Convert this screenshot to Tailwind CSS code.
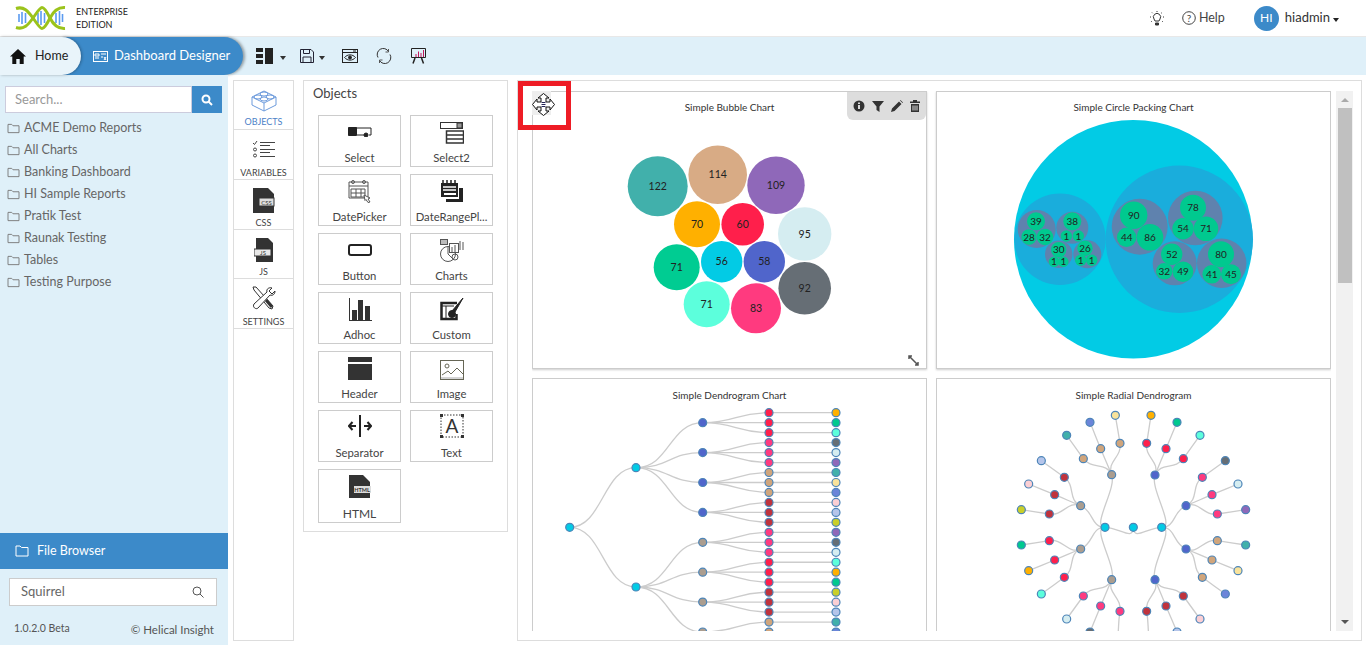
<!doctype html>
<html lang="en">
  <head>
    <meta charset="UTF-8" />
    <title>Dashboard Designer</title>
    <script src="https://cdn.jsdelivr.net/npm/@tailwindcss/browser@4"></script>
  </head>
  <body class="h-[658px] w-[1366px] overflow-hidden bg-white font-['Lato','Liberation_Sans',sans-serif] text-[#333]">
    <svg class="hidden">
      <symbol id="folder" viewBox="0 0 14 12"><path d="M1 10.500V1.500h4l1.500 1.500h6.500v7.500z" fill="none" stroke="#777" stroke-width="1" /></symbol>
    </svg>

    <header class="flex h-[37px] items-center border-b border-[#e8e8e8] pl-[15px] pr-[27px]">
      <svg width="51" height="26" viewBox="15 4 51 26" fill="none">
        <g stroke="#5b9bf0" stroke-width="1.600">
          <path d="M19 13v8M22 11v12M25.500 12v10M38 12v10M41 10v14M44.500 12v10M56 12v10M59.500 10v14M62.500 13v8" />
        </g>
        <path d="M16 7.500C24 5 28 10 33 17s7 10.500 9 10.500S47 23 50 17s8-11 15-10.500" stroke="#9bc31c" stroke-width="3" />
        <path d="M16 26.500C24 29 28 24 33 17s7-10.500 9-10.500S47 11 50 17s8 11 15 10.500" stroke="#9bc31c" stroke-width="3" />
      </svg>
      <div class="ml-[10px] text-[9px] leading-[13px] text-[#222]">ENTERPRISE<br />EDITION</div>
      <svg class="ml-auto" width="16" height="17" viewBox="0 0 16 17" fill="none" stroke="#333">
        <path d="M5 9a3.600 3.600 0 1 1 6 0l-1 2H6z" /><path d="M6.500 13h3v2h-3z" fill="#333" /><path d="M8 1v1M1 7h1M14 7h1M3 2.500l1 1M13 2.500l-1 1M2 12l1-1M14 12l-1-1" stroke-dasharray="1 1" />
      </svg>
      <svg class="ml-[17px]" width="14" height="14" viewBox="0 0 14 14" fill="none"><circle cx="7" cy="7" r="6.300" stroke="#444" /><text x="7" y="10.500" text-anchor="middle" font-size="10" fill="#444">?</text></svg>
      <span class="ml-[3px] text-[12.500px] text-[#444]">Help</span>
      <div class="ml-[29px] flex h-[25px] w-[25px] items-center justify-center rounded-full bg-[#3c8ac9] text-[12px] text-white">HI</div>
      <span class="ml-[6px] text-[13px] text-[#333]">hiadmin</span>
      <span class="ml-[3px] mt-[4px] h-0 w-0 border-x-[3.500px] border-t-[4px] border-x-transparent border-t-[#222]"></span>
    </header>

    <nav class="flex h-[38px] items-center bg-[#dff0f9]">
      <div class="relative z-10 flex h-full w-[81px] items-center rounded-r-[22px] bg-[#e9f4fa] pl-[10px] text-[12.500px] text-[#222] shadow-[1px_0_3px_rgba(0,0,0,0.3)]">
        <svg width="16" height="15" viewBox="0 0 16 15" fill="#111"><path d="M8 0 0 7.500h2.300V15h4v-5h3.400v5h4V7.500H16z" /></svg>
        <span class="ml-[9px]">Home</span>
      </div>
      <div class="-ml-[20px] flex h-full w-[182px] items-center rounded-r-[22px] bg-[#3c8ac9] pl-[32px] text-[13px] text-white shadow-[2px_0_3px_rgba(0,0,0,0.35)]">
        <svg width="15" height="11" viewBox="0 0 15 11" fill="none" stroke="#fff"><rect x="0.500" y="0.500" width="14" height="10" /><path d="M2 3h4v2H2zM8 3h5M8 6h2M11 6l2 3M13 6l-2 3M2 7h4" /></svg>
        <span class="ml-[6px]">Dashboard Designer</span>
      </div>
      <svg class="ml-[13px]" width="17" height="16" viewBox="0 0 17 16" fill="#222"><rect x="0" y="0" width="7" height="4" /><rect x="0" y="6" width="7" height="4" /><rect x="0" y="12" width="7" height="4" /><rect x="9" y="0" width="8" height="16" /></svg>
      <span class="ml-[7px] mt-[4px] h-0 w-0 border-x-[3.500px] border-t-[4px] border-x-transparent border-t-[#333]"></span>
      <svg class="ml-[14px]" width="14" height="14" viewBox="0 0 14 14" fill="none" stroke="#223"><path d="M.5.500h10.500l2.500 2.500v10.500H.5z" /><path d="M3.500.500v4h6v-4M3 13.500V8h8v5.500" /></svg>
      <span class="ml-[5px] mt-[4px] h-0 w-0 border-x-[3.500px] border-t-[4px] border-x-transparent border-t-[#333]"></span>
      <svg class="ml-[17px]" width="16" height="14" viewBox="0 0 16 14" fill="none" stroke="#222"><rect x="0.500" y="0.500" width="15" height="13" /><path d="M.5 3.500h15M11 2h3" /><path d="M2.500 8.500c3-3.500 8-3.500 11 0-3 3.500-8 3.500-11 0z" /><circle cx="8" cy="8.500" r="1.500" fill="#222" /></svg>
      <svg class="ml-[18px]" width="16" height="16" viewBox="0 0 16 16" fill="none" stroke="#333"><path d="M2 9.500A6 6 0 0 1 12.500 3.500M14 6.500A6 6 0 0 1 3.500 12.500" /><path d="M12.500 1v3h-3M3.500 15v-3h3" stroke="#555" /></svg>
      <svg class="ml-[19px]" width="15" height="16" viewBox="0 0 15 16" fill="none" stroke="#222"><path d="M.5.500h14v9H.5z" /><path d="M4 10 2 15.500M10.500 10l2 5.500" stroke-width="1.500" /><path d="M5 9V6M7.500 9V3.500M10 9V5M12.500 9V2" stroke="#c2185b" /></svg>
    </nav>

    <main class="flex h-[583px] items-start">
      <aside class="flex h-[570px] w-[228px] flex-col bg-[#dff0f9] text-[12.500px] text-[#666]">
        <div class="ml-[5px] mt-[11px] flex h-[27px] w-[217px]">
          <div class="flex flex-1 items-center border border-[#ccd] bg-white pl-[9px] text-[13px] text-[#999]">Search...</div>
          <div class="flex w-[30px] items-center justify-center bg-[#3c8ac9]">
            <svg width="12" height="12" viewBox="0 0 12 12" fill="none" stroke="#fff" stroke-width="2"><circle cx="5" cy="5" r="3.500" /><path d="m7.500 7.500 3.500 3.500" /></svg>
          </div>
        </div>
        <ul class="mt-[4px] pl-[7px]">
          <li class="flex h-[22px] items-center gap-[4px]"><svg width="13" height="11"><use href="#folder" /></svg>ACME Demo Reports</li>
          <li class="flex h-[22px] items-center gap-[4px]"><svg width="13" height="11"><use href="#folder" /></svg>All Charts</li>
          <li class="flex h-[22px] items-center gap-[4px]"><svg width="13" height="11"><use href="#folder" /></svg>Banking Dashboard</li>
          <li class="flex h-[22px] items-center gap-[4px]"><svg width="13" height="11"><use href="#folder" /></svg>HI Sample Reports</li>
          <li class="flex h-[22px] items-center gap-[4px]"><svg width="13" height="11"><use href="#folder" /></svg>Pratik Test</li>
          <li class="flex h-[22px] items-center gap-[4px]"><svg width="13" height="11"><use href="#folder" /></svg>Raunak Testing</li>
          <li class="flex h-[22px] items-center gap-[4px]"><svg width="13" height="11"><use href="#folder" /></svg>Tables</li>
          <li class="flex h-[22px] items-center gap-[4px]"><svg width="13" height="11"><use href="#folder" /></svg>Testing Purpose</li>
        </ul>
        <div class="mt-auto flex h-[36px] items-center bg-[#3c8ac9] pl-[15px] text-[12.500px] text-white">
          <svg width="14" height="12" viewBox="0 0 14 12" fill="none" stroke="#fff"><path d="M1 11V1h4l1.500 1.500H13V11z" /></svg>
          <span class="ml-[8px]">File Browser</span>
        </div>
        <div class="ml-[9px] mt-[9px] flex h-[28px] w-[208px] items-center justify-between border border-[#ccc] bg-white pl-[11px] pr-[12px] text-[13px] text-[#666]">
          Squirrel
          <svg width="12" height="12" viewBox="0 0 12 12" fill="none" stroke="#555"><circle cx="5" cy="5" r="4" /><path d="m8 8 3.500 3.500" /></svg>
        </div>
        <div class="flex h-[39px] justify-between px-[14px] pt-[15px] text-[#555]">
          <span class="text-[10.500px]">1.0.2.0 Beta</span><span class="text-[11.500px]">© Helical Insight</span>
        </div>
      </aside>

      <div class="ml-[5px] mt-[5px] h-[561px] w-[61px] border border-[#ddd] text-center text-[9px]">
        <div class="flex h-[49px] flex-col items-center justify-end border-b border-[#ddd] pb-[1px] text-[#4d7fc7]">
          <svg width="26" height="24" viewBox="0 0 26 24" fill="none" stroke="#6d9bdc"><path d="M1 9 13 3l12 6v8l-12 6-12-6zM1 9l12 6 12-6M13 15v8" /><ellipse cx="13" cy="6" rx="4" ry="2" /><ellipse cx="7" cy="9" rx="4" ry="2" /><ellipse cx="19" cy="9" rx="4" ry="2" /><ellipse cx="13" cy="11" rx="4" ry="2" /></svg>
          <span class="mt-[3px]">OBJECTS</span>
        </div>
        <div class="flex h-[50px] flex-col items-center justify-end border-b border-[#ddd] text-[#444]">
          <svg width="24" height="18" viewBox="0 0 24 18" fill="none" stroke="#444"><path d="M1 3l1.500 1.500L5 1M8 2.500h15M8 5.500h10M8 9.500h15M8 12.500h10M8 16.500h15" /><circle cx="3" cy="9.500" r="1.500" /><circle cx="3" cy="15.500" r="1.500" /></svg>
          <span class="mt-[8px]">VARIABLES</span>
        </div>
        <div class="flex h-[50px] flex-col items-center justify-end border-b border-[#ddd] text-[#444]">
          <svg width="22" height="25" viewBox="0 0 22 25"><path d="M0 0h15l6 6v19H0z" fill="#333" /><rect x="6" y="10" width="15" height="8" fill="#ddd" stroke="#333" /><text x="13.500" y="16.500" text-anchor="middle" font-size="6" fill="#333">CSS</text></svg>
          <span class="mt-[3px]">CSS</span>
        </div>
        <div class="flex h-[49px] flex-col items-center justify-end border-b border-[#ddd] text-[#444]">
          <svg width="20" height="24" viewBox="0 0 20 24"><path d="M2 0h12l5 5v19H2z" fill="#333" /><rect x="0" y="11" width="17" height="7" fill="#e8e8e8" stroke="#333" /><text x="9" y="17" text-anchor="middle" font-size="6" fill="#333">JS</text></svg>
          <span class="mt-[3px]">JS</span>
        </div>
        <div class="flex h-[50px] flex-col items-center justify-end border-b border-[#ddd] text-[#444]">
          <svg width="24" height="25" viewBox="0 0 24 25" fill="none" stroke="#333"><path d="M1 1l3 0 17 19-1 3-3-1L2 4z" fill="#fff" /><path d="M23 5l-3 3-3-3 3-3c-3-1-6 1-5 4L2 18c-2 3 2 6 4 4L18 9c3 1 5-1 5-4z" fill="#fff" /><path d="M14 14l6 7" stroke-width="3" /></svg>
          <span class="mt-[4px]">SETTINGS</span>
        </div>
      </div>

      <section class="ml-[9px] mt-[5px] h-[452px] w-[205px] border border-[#ddd]">
        <h2 class="ml-[9px] mt-[4px] text-[13px] leading-[16px] text-[#444]">Objects</h2>
        <div class="ml-[14px] mt-[14px] grid w-[175px] grid-cols-[83px_83px] gap-x-[9px] gap-y-[7px] text-[11.300px] text-[#444] [&_span]:translate-y-px">
          <div class="flex h-[52px] flex-col items-center justify-end border border-[#ccc]">
            <svg class="mb-[12px]" width="24" height="10" viewBox="0 0 24 10" fill="none" stroke="#222"><path d="M1 1h22v7h-2" /><path d="M.5.500h8v8h-8z" fill="#222" /><path d="M9 8h9" /><circle cx="18" cy="8" r="2" fill="#222" /></svg>
            <span>Select</span>
          </div>
          <div class="flex h-[52px] flex-col items-center justify-end border border-[#ccc]">
            <svg class="mb-[5px]" width="24" height="22" viewBox="0 0 24 22" fill="none" stroke="#333"><rect x="0.500" y="0.500" width="22" height="6" /><rect x="17" y="1" width="5" height="5" fill="#999" /><path d="M6.500 9h17v12h-17zM6.500 13h17M6.500 17h17" stroke-width="1.500" /></svg>
            <span>Select2</span>
          </div>
          <div class="flex h-[52px] flex-col items-center justify-end border border-[#ccc]">
            <svg class="mb-[5px]" width="24" height="23" viewBox="0 0 24 23" fill="none" stroke="#555"><path d="M1 2h19v16H1zM1 6h19" /><circle cx="5" cy="2" r="1.500" /><circle cx="16" cy="2" r="1.500" /><path d="M3 9h14v8H3zM8 9v8M13 9v8M3 13h14" /><path d="M16 15l6 3-2 1 2 3-2 .5-2-3-1 1z" fill="#fff" /></svg>
            <span>DatePicker</span>
          </div>
          <div class="flex h-[52px] flex-col items-center justify-end border border-[#ccc]">
            <svg class="mb-[5px]" width="24" height="23" viewBox="0 0 24 23"><path d="M1 3h17v14H1z" fill="#222" /><path d="M3 0v4M7 0v4M11 0v4M15 0v4" stroke="#222" stroke-width="1.500" /><path d="M3 7h13M3 10h13" stroke="#fff" stroke-width="1.500" /><path d="M4 13h12v2H4z" fill="#fff" /><path d="M19 8h4v14H6v-3h13z" fill="#222" /></svg>
            <span>DateRangePl...</span>
          </div>
          <div class="flex h-[52px] flex-col items-center justify-end border border-[#ccc]">
            <svg class="mb-[11px]" width="24" height="12" viewBox="0 0 24 12" fill="none" stroke="#222" stroke-width="2"><rect x="1" y="1" width="22" height="10" rx="2" /></svg>
            <span>Button</span>
          </div>
          <div class="flex h-[52px] flex-col items-center justify-end border border-[#ccc]">
            <svg class="mb-[5px]" width="24" height="23" viewBox="0 0 24 23" fill="none" stroke="#555"><circle cx="8" cy="15" r="7.500" /><path d="M8 15V7.500M8 15l5 5" /><rect x="0.500" y="0.500" width="7" height="5" fill="#bbb" /><rect x="9.500" y="4.500" width="9" height="9" fill="#fff" /><path d="M12 13V8M15 13V6M20 11V2M23 11V3" /><circle cx="15" cy="18" r="3" /></svg>
            <span>Charts</span>
          </div>
          <div class="flex h-[52px] flex-col items-center justify-end border border-[#ccc]">
            <svg class="mb-[5px]" width="24" height="23" viewBox="0 0 24 23" fill="#333"><path d="M1 0v23h23v-1H2V0z" /><rect x="4" y="12" width="5" height="10" /><rect x="10" y="2" width="5" height="20" /><rect x="17" y="8" width="5" height="14" /></svg>
            <span>Adhoc</span>
          </div>
          <div class="flex h-[52px] flex-col items-center justify-end border border-[#ccc]">
            <svg class="mb-[5px]" width="24" height="23" viewBox="0 0 24 23" fill="none" stroke="#222"><path d="M17 5H1.500v16h15v-5" stroke-width="2.500" /><path d="M2 8h12M6 8v12" /><path d="M23 0l-8 14-3-1z" fill="#222" /><circle cx="12" cy="16" r="3.500" fill="#222" /></svg>
            <span>Custom</span>
          </div>
          <div class="flex h-[52px] flex-col items-center justify-end border border-[#ccc]">
            <svg class="mb-[5px]" width="24" height="23" viewBox="0 0 24 23" fill="#333"><rect width="24" height="5" /><rect y="7" width="24" height="16" /></svg>
            <span>Header</span>
          </div>
          <div class="flex h-[52px] flex-col items-center justify-end border border-[#ccc]">
            <svg class="mb-[5px]" width="24" height="20" viewBox="0 0 24 20" fill="none" stroke="#665"><rect x="0.500" y="0.500" width="23" height="19" /><circle cx="7" cy="6" r="2" /><path d="M2 15l6-4 3 3 6-6 6 6" /><path d="M1 18h22" stroke="#aaa" /></svg>
            <span>Image</span>
          </div>
          <div class="flex h-[52px] flex-col items-center justify-end border border-[#ccc]">
            <svg class="mb-[7px]" width="24" height="22" viewBox="0 0 24 22" fill="none" stroke="#222" stroke-width="2"><path d="M12 0v22" /><path d="M1 11h7M4.500 7 1 11l3.500 4M16 11h7M19.500 7l3.500 4-3.500 4" /></svg>
            <span>Separator</span>
          </div>
          <div class="flex h-[52px] flex-col items-center justify-end border border-[#ccc]">
            <svg class="mb-[6px]" width="24" height="24" viewBox="0 0 24 24"><rect x="1" y="1" width="22" height="22" fill="none" stroke="#333" stroke-dasharray="1.500 1.500" /><path d="M0 0h3v3H0zM21 0h3v3h-3zM0 21h3v3H0zM21 21h3v3h-3z" fill="#333" /><text x="12" y="19" text-anchor="middle" font-size="19" fill="#333">A</text></svg>
            <span>Text</span>
          </div>
          <div class="flex h-[54px] flex-col items-center justify-end border border-[#ccc] text-[12px]">
            <svg class="mb-[6px]" width="22" height="23" viewBox="0 0 22 23"><path d="M0 0h14l7 7v16H0z" fill="#333" /><rect x="5" y="11" width="17" height="7" fill="#ddd" /><text x="13" y="17" text-anchor="middle" font-size="5.500" font-weight="700" fill="#333">HTML</text></svg>
            <span>HTML</span>
          </div>
        </div>
      </section>

      <section class="relative ml-[9px] mt-[5px] flex h-[561px] w-[845px] border border-[#ddd] pl-[14px] pt-[10px]">
        <div class="grid h-[540px] w-[799px] grid-cols-[395px_395px] content-start gap-x-[9px] gap-y-[9px] overflow-hidden">
          <article class="relative h-[278px] border border-[#ccc] shadow-[0_1px_2px_rgba(0,0,0,0.2)]">
            <svg id="bubble" class="block" width="393" height="276" viewBox="533 92 393 276" text-anchor="middle" font-size="10.500" fill="#222"></svg>
            <h3 class="absolute inset-x-0 top-[8px] text-center text-[10px] text-[#333]">Simple Bubble Chart</h3>
            <div class="absolute right-0 top-0 flex h-[28px] w-[79px] items-center justify-between rounded-b-[6px] bg-[#ddd] px-[6px]">
              <svg width="12" height="12" viewBox="0 0 12 12"><circle cx="6" cy="6" r="5.500" fill="#333" /><path d="M5 5h2v4H5zM5 2.500h2v1.500H5z" fill="#ddd" /></svg>
              <svg width="12" height="12" viewBox="0 0 12 12" fill="#333"><path d="M0 1h12L7.500 6.500V12l-3-2V6.500z" /></svg>
              <svg width="12" height="12" viewBox="0 0 12 12" fill="#333"><path d="M0 12l1-3.500L8 1.500 10.500 4 3.500 11zM9 .5l.5-.5L12 2.500l-.5.500z" /></svg>
              <svg width="10" height="12" viewBox="0 0 10 12" fill="#333"><path d="M0 1.500h3V0h4v1.500h3V3H0zM1 4h8v8H1z" /><path d="M3 5.500v5M5 5.500v5M7 5.500v5" stroke="#ddd" /></svg>
            </div>
            <svg class="absolute bottom-[2px] right-[7px]" width="11" height="11" viewBox="0 0 11 11" fill="none" stroke="#555" stroke-width="1.500"><path d="M1 1l9 9M1 4V1h3M7 10h3V7" /></svg>
          </article>
          <article class="relative h-[278px] border border-[#ccc] shadow-[0_1px_2px_rgba(0,0,0,0.2)]">
            <svg id="pack" class="block" width="393" height="276" viewBox="937 92 393 276" text-anchor="middle" font-size="10" fill="#222"></svg>
            <h3 class="absolute inset-x-0 top-[8px] text-center text-[10px] text-[#333]">Simple Circle Packing Chart</h3>
          </article>
          <article class="relative h-[278px] border border-[#ccc]">
            <svg id="dendro" class="block" width="393" height="276" viewBox="533 379 393 276"></svg>
            <h3 class="absolute inset-x-0 top-[9px] text-center text-[10px] text-[#333]">Simple Dendrogram Chart</h3>
          </article>
          <article class="relative h-[278px] border border-[#ccc]">
            <svg id="radial" class="block" width="393" height="276" viewBox="937 379 393 276"></svg>
            <h3 class="absolute inset-x-0 top-[9px] text-center text-[10px] text-[#333]">Simple Radial Dendrogram</h3>
          </article>
        </div>
        <div class="ml-[5px] flex h-[540px] w-[17px] flex-col items-center bg-[#f1f1f1]">
          <span class="mt-[7px] h-0 w-0 border-x-[4px] border-b-[4px] border-x-transparent border-b-[#aaa]"></span>
          <div class="mt-[6px] h-[175px] w-[14px] bg-[#c0c0c0]"></div>
          <span class="mb-[7px] mt-auto h-0 w-0 border-x-[4px] border-t-[4px] border-x-transparent border-t-[#555]"></span>
        </div>
        <!-- highlight drawn over the first chart -->
        <div class="absolute left-0 top-0 h-[49px] w-[53px] border-[5px] border-[#ee1c25]">
          <div class="ml-[9px] mt-[5px] flex h-[24px] w-[19px] items-start bg-[#eee]">
            <svg class="mt-[2px] shrink-0" width="23" height="23" viewBox="0 0 23 23" fill="#fff" stroke="#111"><path d="M11.500.5 17 5h-3v4h4V6l4.500 5.500L18 17v-3h-4v4h3l-5.500 4.500L6 18h3v-4H5v3L.5 11.500 5 6v3h4V5H6z" /><path d="M9.500 9.500h4M9.500 11.500h4M9.500 13.500h4" stroke="#225" /></svg>
          </div>
        </div>
      </section>
    </main>

    <script>
      const NS = "http://www.w3.org/2000/svg";
      function add(svg, tag, attrs, text) {
        const el = document.createElementNS(NS, tag);
        for (const k in attrs) el.setAttribute(k, attrs[k]);
        if (text) el.textContent = text;
        svg.appendChild(el);
      }

      const bubble = document.querySelector("#bubble");
      [
        [657.7, 186.3, 30, "#41b0ab", "122"], [717.7, 174.7, 29.3, "#d8ab85", "114"], [776, 185.3, 28.7, "#8f68b9", "109"],
        [697, 224.3, 23, "#ffb000", "70"], [742.7, 224.3, 21.3, "#ff1f4b", "60"], [804.7, 234, 26.7, "#d5edf1", "95"],
        [676.7, 267.3, 23, "#00cc92", "71"], [721.7, 261.7, 20.7, "#02cbe5", "56"], [764.3, 261.7, 20.7, "#5065cb", "58"],
        [804.7, 288.3, 26.3, "#666e75", "92"], [706.7, 304.3, 23, "#5cffdc", "71"], [756, 308.3, 25, "#ff3a7f", "83"],
      ].forEach(([x, y, r, fill, label]) => {
        add(bubble, "circle", { cx: x, cy: y, r, fill });
        add(bubble, "text", { x, y: y + 3.500 }, label);
      });

      const pack = document.querySelector("#pack");
      add(pack, "circle", { cx: 1133.3, cy: 239.3, r: 119.3, fill: "#02cbe5" });
      [[1060, 239.3, 45.7], [1179.3, 239.3, 73.7]].forEach(([cx, cy, r]) => add(pack, "circle", { cx, cy, r, fill: "#1aaddc" }));
      [
        [1036.7, 229, 19], [1072.3, 227.7, 16], [1058.7, 254.3, 13.7], [1087.3, 254.3, 14],
        [1139.7, 226.7, 28], [1195.3, 218, 27.3], [1174.7, 263.3, 22], [1221.7, 263.3, 24.7],
      ].forEach(([cx, cy, r]) => add(pack, "circle", { cx, cy, r, fill: "#5f82ae" }));
      [
        [1036, 221.3, 9, "39"], [1029, 237, 7.7, "28"], [1045, 237, 8.3, "32"], [1072.3, 221.3, 9, "38"],
        [1066.3, 236, 5.7, "1"], [1078.3, 236, 5.7, "1"], [1058.7, 249.7, 7.7, "30"], [1054, 261.7, 5.3, "1"],
        [1063.3, 261.7, 5.3, "1"], [1085, 248.3, 7.7, "26"], [1080.7, 260.3, 5.7, "1"], [1091.7, 260.3, 5.7, "1"],
        [1133.7, 215.3, 13.7, "90"], [1126.7, 237.3, 9.7, "44"], [1150, 237.3, 13.3, "86"], [1193, 207.7, 13, "78"],
        [1183, 228.7, 10.7, "54"], [1206, 228.7, 12.3, "71"], [1171.7, 254.3, 10.7, "52"], [1164.3, 271.3, 8.3, "32"],
        [1183, 271.7, 10.3, "49"], [1221, 254.3, 13, "80"], [1211.7, 274.3, 9.3, "41"], [1231, 274.3, 10, "45"],
      ].forEach(([x, y, r, label]) => {
        add(pack, "circle", { cx: x, cy: y, r, fill: "#00c98f" });
        add(pack, "text", { x, y: y + 3.500 }, label);
      });

      const RED = "#ff1f4b", PINK = "#ff3a7f", TAN = "#d0a57c", DARK = "#c0333d", BLUE = "#5065cb", GREY = "#ab9d8f", CYAN = "#02cbe5";
      const AMB = "#ffb000", GRN = "#00c98f", MNT = "#5cffdc", SLT = "#666e75", ICE = "#d5edf1", PUR = "#8f68b9";
      const TEAL = "#41b0ab", SAND = "#f9e39b", PERI = "#6b85d9", ROSE = "#fbcfd4", LILA = "#b5c5ea", LIME = "#c9cf2a";
      const nodeAttrs = (cx, cy, fill) => ({ cx, cy, r: 4, fill, stroke: "#4d85b8", "stroke-width": 1.2 });
      const linkAttrs = (d) => ({ d, fill: "none", stroke: "#ccc", "stroke-width": 1.3 });

      // horizontal tree, y spacing 9.97 at the leaves
      const dendro = document.querySelector("#dendro");
      const l3 = [RED, PINK, TAN, DARK, PINK, RED, DARK, TAN, RED];
      const l4 = [AMB, GRN, MNT, SLT, ICE, PUR, TEAL, SAND, PERI, ROSE, LILA, LIME, PUR, SLT, ICE, MNT, AMB, GRN, LIME, ROSE, LILA, TEAL, PERI, SAND, AMB, GRN, MNT];
      const curve = (x0, y0, x1, y1) => `M${x0} ${y0}C${(x0 + x1) / 2} ${y0} ${(x0 + x1) / 2} ${y1} ${x1} ${y1}`;
      const nodes = [];
      const rootY = 527.3;
      [467.7, 587].forEach((y1, a) => {
        add(dendro, "path", linkAttrs(curve(569.7, rootY, 636, y1)));
        nodes.push([636, y1, CYAN]);
        for (let b = 0; b < 4; b++) {
          const gi = a * 4 + b;
          const y2 = 422.7 + gi * 29.9;
          add(dendro, "path", linkAttrs(curve(636, y1, 702.7, y2)));
          nodes.push([702.7, y2, a ? GREY : BLUE]);
          for (let c = 0; c < 3; c++) {
            const li = gi * 3 + c;
            const y3 = 412.7 + li * 9.97;
            add(dendro, "path", linkAttrs(curve(702.7, y2, 769, y3)));
            add(dendro, "path", linkAttrs(`M769 ${y3}H836`));
            nodes.push([769, y3, l3[gi]], [836, y3, l4[li]]);
          }
        }
      });
      nodes.push([569.7, rootY, CYAN]);
      nodes.forEach(([x, y, fill]) => add(dendro, "circle", nodeAttrs(x, y, fill)));

      // radial tree, read off the picture in 3x coordinates around the root
      const radial = document.querySelector("#radial");
      const O = [595, 457];
      const groups = [
        [680, [660, 300], BLUE, RED, [[635, 205, 648, 121, AMB], [693, 221, 726, 142, GRN], [745, 251, 795, 181, MNT]]],
        [680, [753, 392], BLUE, PINK, [[802, 307, 871, 257, SLT], [831, 359, 909, 327, ICE], [847, 417, 932, 404, PUR]]],
        [680, [753, 522], BLUE, TAN, [[847, 497, 932, 510, TEAL], [831, 555, 909, 587, SAND], [802, 607, 871, 657, PERI]]],
        [680, [660, 614], BLUE, DARK, [[745, 663, 795, 732, ROSE], [693, 693, 726, 771, LILA], [635, 709, 643, 795, LIME]]],
        [510, [530, 614], GREY, PINK, [[445, 663, 395, 732, ICE], [497, 693, 465, 771, SLT], [555, 709, 547, 795, PUR]]],
        [510, [437, 522], GREY, RED, [[343, 497, 259, 510, GRN], [359, 555, 281, 587, AMB], [388, 607, 319, 657, MNT]]],
        [510, [437, 392], GREY, DARK, [[388, 307, 319, 257, LILA], [359, 359, 281, 327, ROSE], [343, 417, 259, 404, LIME]]],
        [510, [530, 299], GREY, TAN, [[445, 251, 395, 181, TEAL], [497, 221, 465, 142, PERI], [555, 205, 541, 121, SAND]]],
      ];
      const px = (x) => 935 + x / 3, py = (y) => 375 + y / 3;
      function radialLink(x0, y0, x1, y1) {
        const a = [x0 - O[0], y0 - O[1]], b = [x1 - O[0], y1 - O[1]];
        const ra = Math.hypot(...a), rb = Math.hypot(...b), m = (ra + rb) / 2;
        const c1 = ra ? [O[0] + (a[0] * m) / ra, O[1] + (a[1] * m) / ra] : [O[0], O[1] + m];
        const c2 = [O[0] + (b[0] * m) / rb, O[1] + (b[1] * m) / rb];
        return `M${px(x0)} ${py(y0)}C${px(c1[0])} ${py(c1[1])} ${px(c2[0])} ${py(c2[1])} ${px(x1)} ${py(y1)}`;
      }
      const rNodes = [[595, 457, CYAN], [510, 457, CYAN], [680, 457, CYAN]];
      [510, 680].forEach((x) => add(radial, "path", linkAttrs(radialLink(595, 457, x, 457))));
      groups.forEach(([x1, [x2, y2], c2, c3, kids]) => {
        add(radial, "path", linkAttrs(radialLink(x1, 457, x2, y2)));
        rNodes.push([x2, y2, c2]);
        kids.forEach(([x3, y3, x4, y4, c4]) => {
          add(radial, "path", linkAttrs(radialLink(x2, y2, x3, y3)));
          add(radial, "path", linkAttrs(radialLink(x3, y3, x4, y4)));
          rNodes.push([x3, y3, c3], [x4, y4, c4]);
        });
      });
      rNodes.forEach(([x, y, fill]) => add(radial, "circle", nodeAttrs(px(x), py(y), fill)));
    </script>
  </body>
</html>
